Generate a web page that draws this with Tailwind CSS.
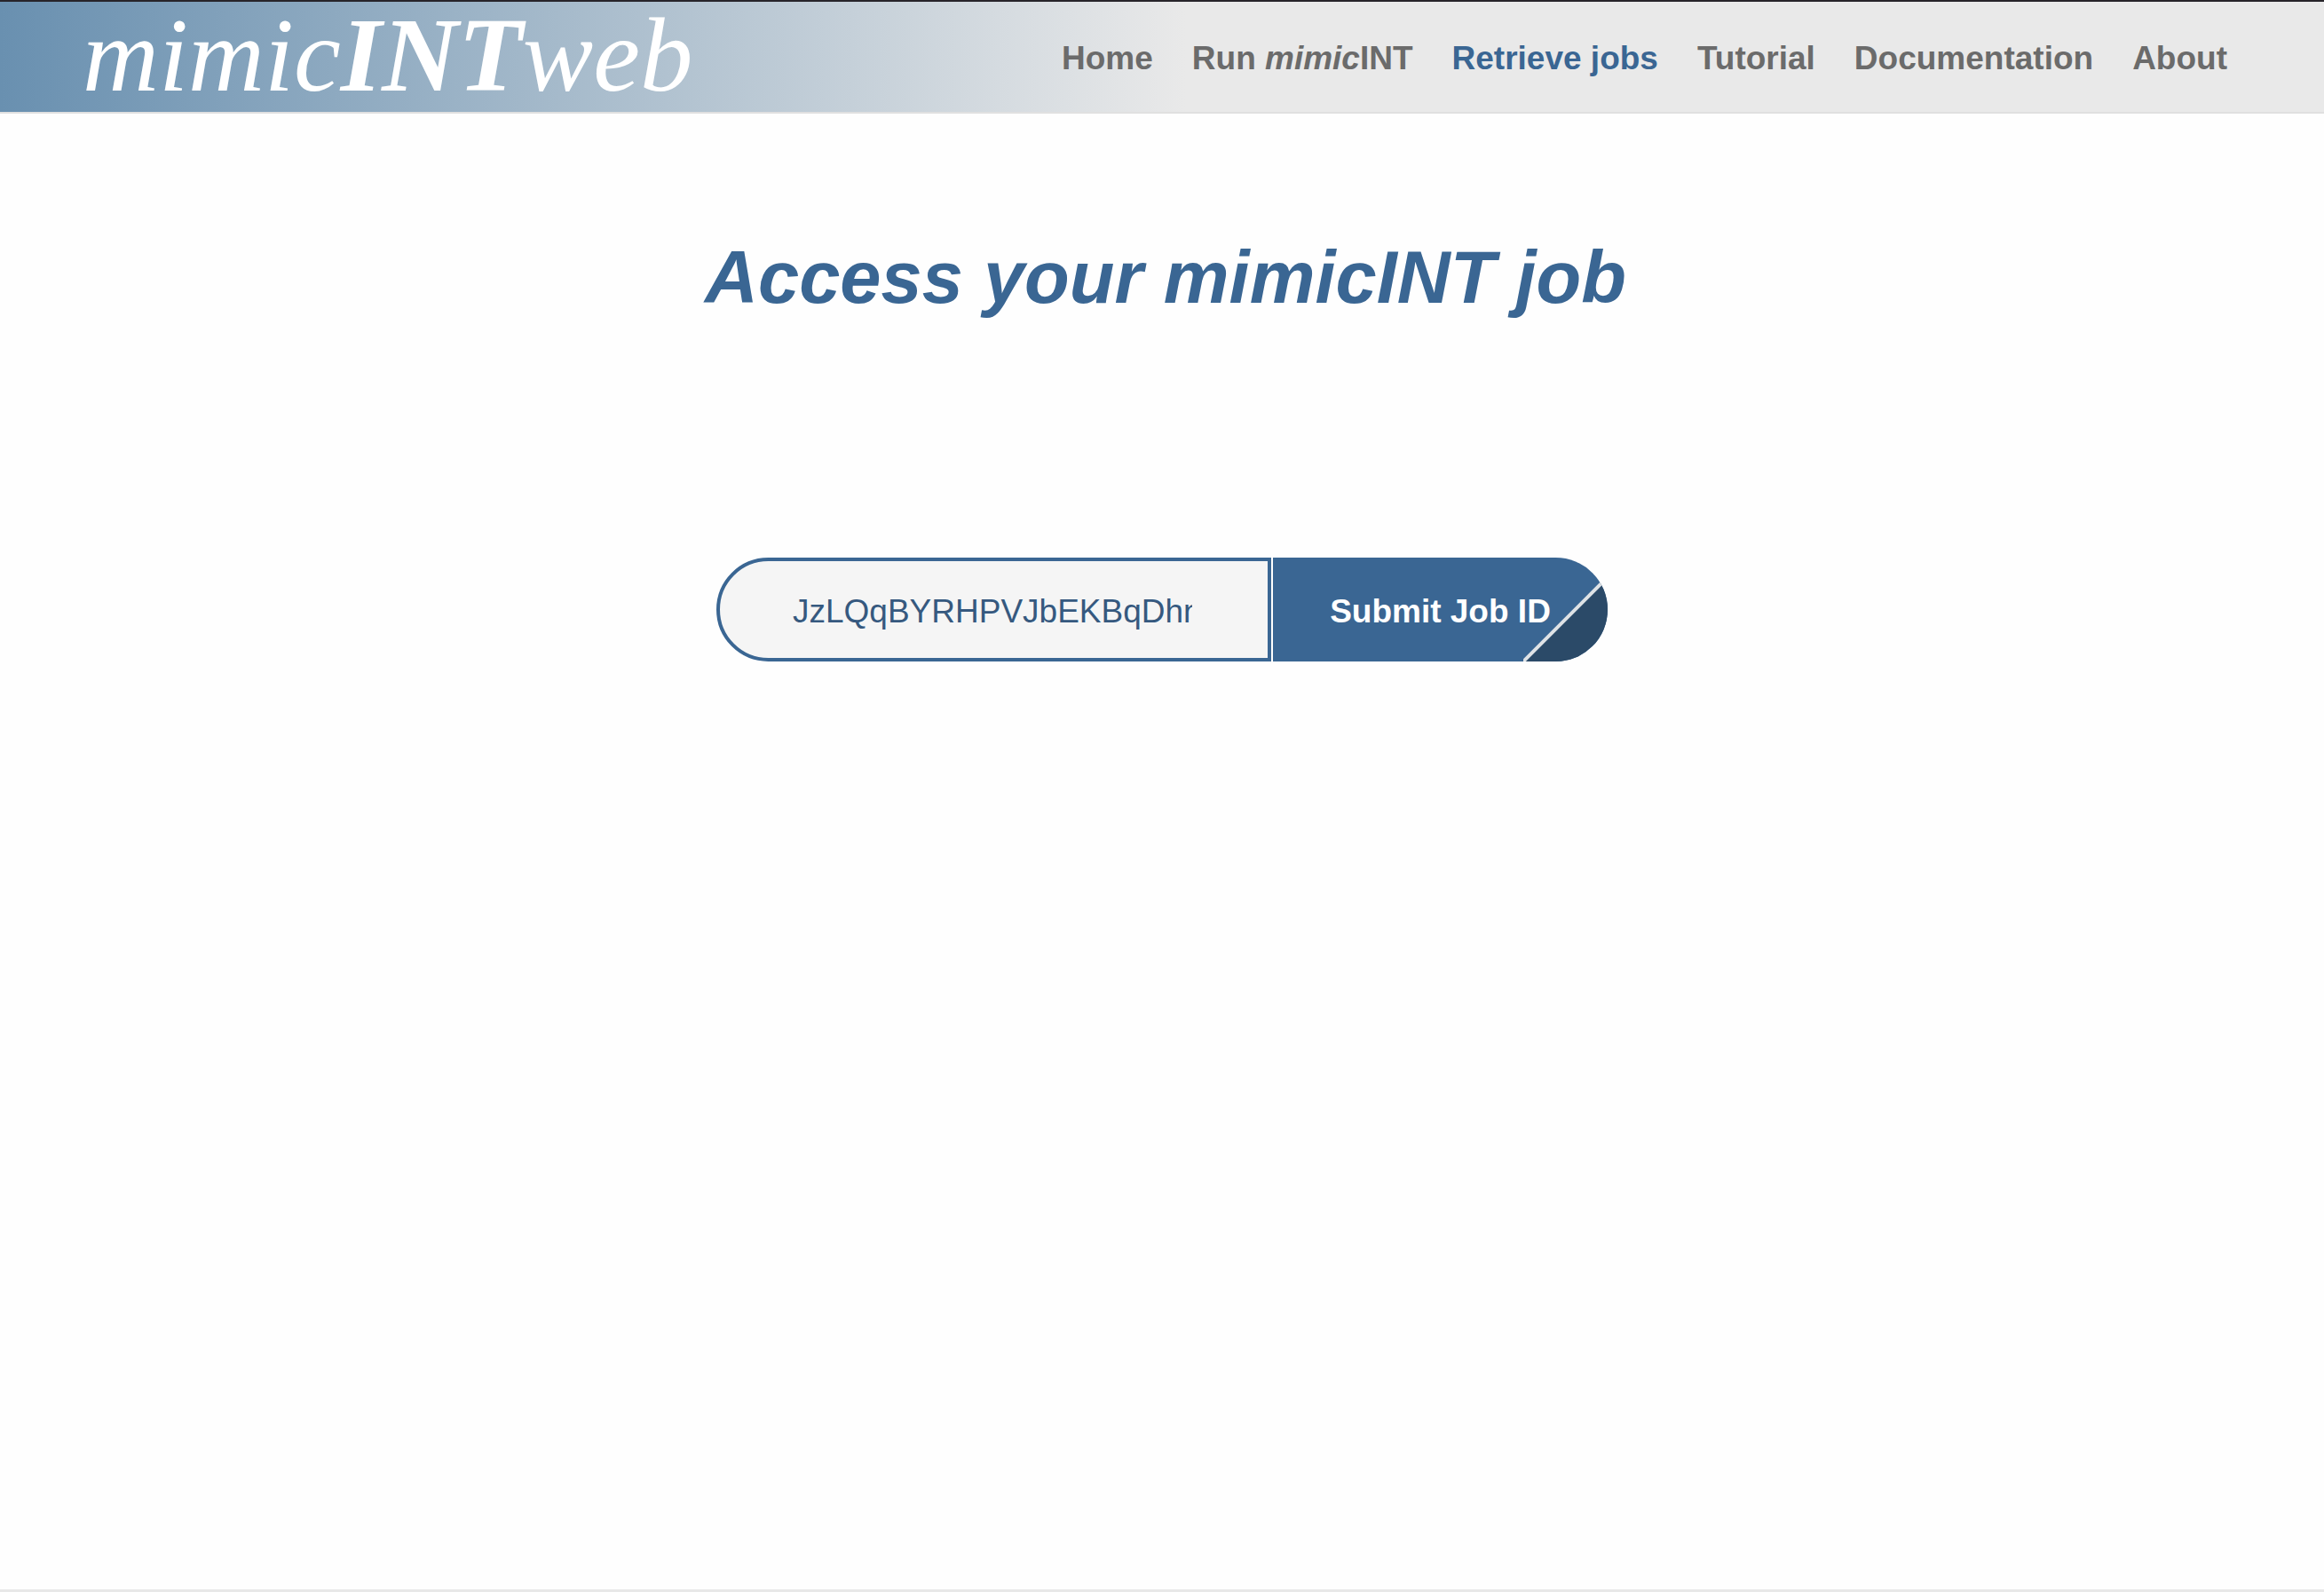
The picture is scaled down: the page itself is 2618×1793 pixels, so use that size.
<!DOCTYPE html>
<html lang="en">
<head>
<meta charset="utf-8">
<meta name="viewport" content="width=device-width, initial-scale=1">
<title>mimicINTweb - Retrieve jobs</title>
<script src="https://cdn.jsdelivr.net/npm/@tailwindcss/browser@4"></script>
</head>
<body class="flex min-h-screen flex-col bg-[#fefefe] font-['Liberation_Sans',Arial,sans-serif]">
<header class="flex h-32 items-center justify-between border-t-2 border-b-2 border-t-[#27242a] border-b-[#e0e0e0] bg-linear-to-r/srgb from-[#6990b0] via-[#e9e9e9] via-51% to-[#e9e9e9] pr-[109px] pl-[93px]">
  <a href="#" class="pb-1 font-['Liberation_Serif',Georgia,serif] text-[119px] leading-[120px] text-white italic">mimic<strong class="font-bold">INT</strong>web</a>
  <nav class="flex gap-11 pt-1 text-[37px] leading-11 font-bold whitespace-nowrap text-[#6b6b6b]">
    <a href="#">Home</a>
    <a href="#">Run <em>mimic</em>INT</a>
    <a href="#" aria-current="page" class="text-[#3a6693]">Retrieve jobs</a>
    <a href="#">Tutorial</a>
    <a href="#">Documentation</a>
    <a href="#">About</a>
  </nav>
</header>
<main class="flex grow flex-col items-center pt-[137px]">
  <h1 class="pl-2 text-[83px] leading-24 font-bold text-[#3a6693] italic">Access your mimicINT job</h1>
  <form class="mt-[267px] flex gap-0.5">
    <input type="text" aria-label="Job ID" value="JzLQqBYRHPVJbEKBqDhnRtWc" class="h-[117px] w-[625px] rounded-l-full border-4 border-[#3a6693] bg-[#f5f5f5] pt-1 pr-[85px] pl-[82px] text-[37px] text-[#36597f]">
    <button type="button" class="relative h-[117px] w-[377px] overflow-hidden rounded-r-full bg-[#3a6693] pt-1 text-[37px] font-bold text-white">
      <svg class="absolute right-0 bottom-0" width="95" height="95" viewBox="0 0 95 95" aria-hidden="true">
        <path d="M0 95 95 0V95Z" fill="#2b4a68"/>
        <path d="M-3 98 98 -3" stroke="#dfe3e6" stroke-width="4"/>
      </svg>
      <span class="relative">Submit Job ID</span>
    </button>
  </form>
</main>
<footer class="border-t-3 border-[#e8e8e8]"></footer>
</body>
</html>
